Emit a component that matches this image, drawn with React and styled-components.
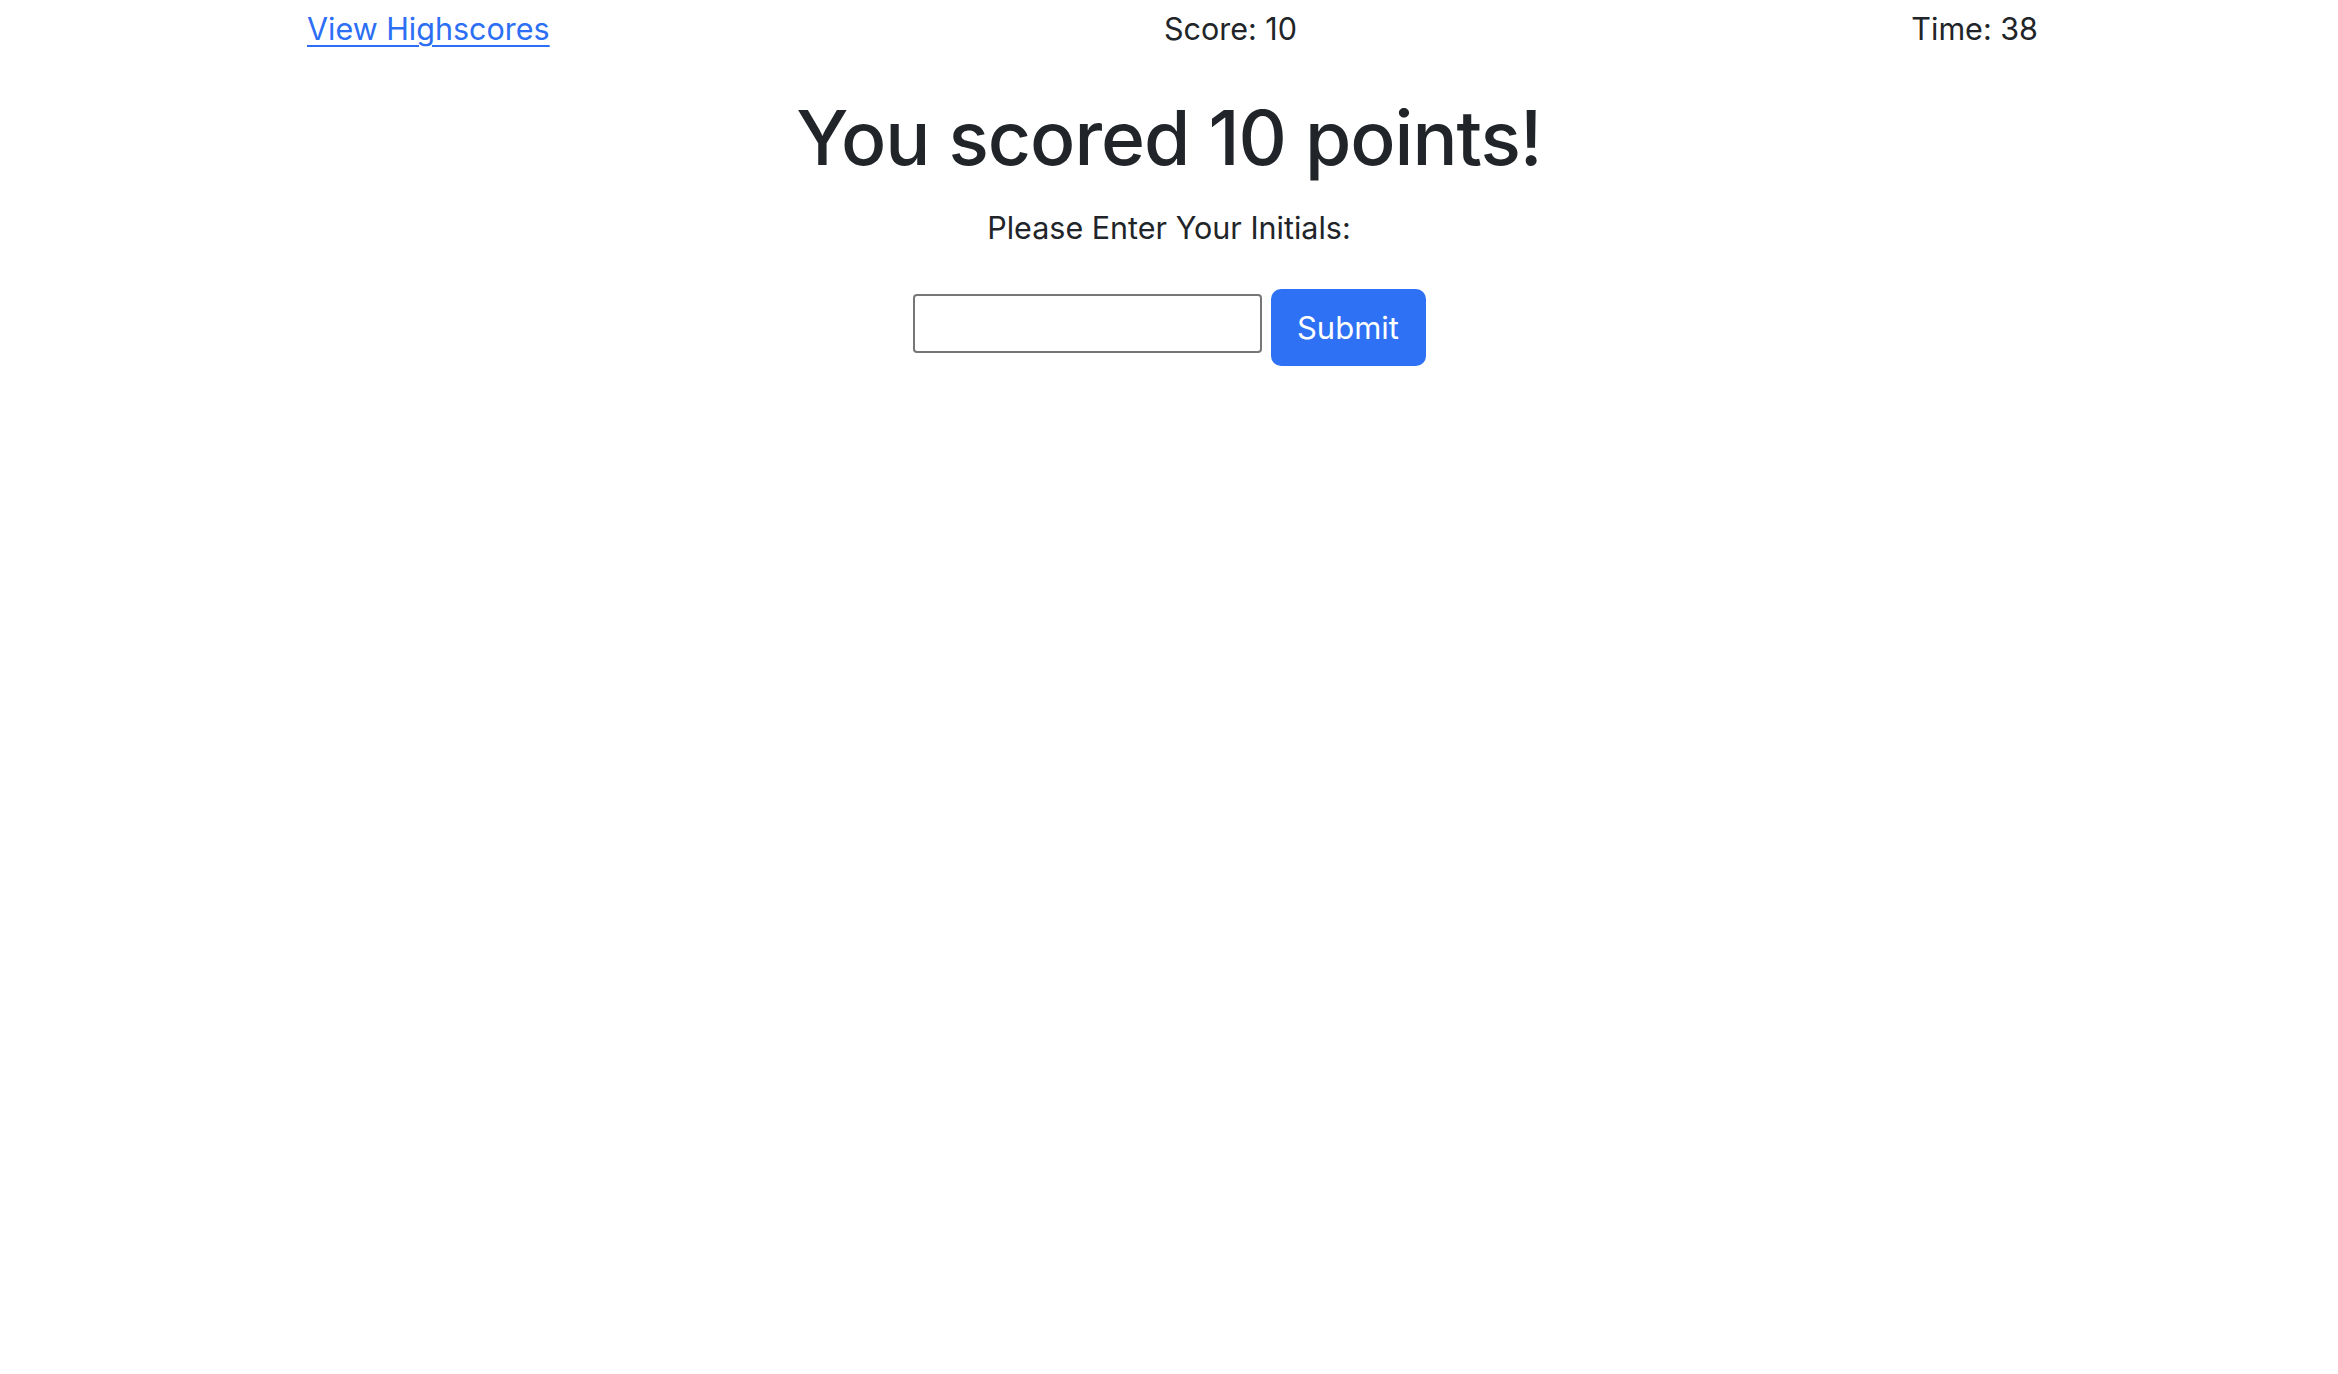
import React from "react";
import styled, { createGlobalStyle } from "styled-components";

const Global = createGlobalStyle`
  html, body { margin: 0; padding: 0; background: #ffffff; }
  body {
    font-family: Inter, "Noto Sans", "Liberation Sans", sans-serif;
    color: #212529;
    font-size: 30.5px;
    line-height: 48px;
  }
`;

const Page = styled.div`
  width: 2338px;
  min-height: 1374px;
  display: flex;
  flex-direction: column;
`;

const TopBar = styled.header`
  display: flex;
  justify-content: space-between;
  align-items: center;
  padding: 5px 300px 0 307px;
  height: 48px;
`;

const HighscoreLink = styled.a`
  color: #2d6ff4;
  text-decoration: underline;
  text-decoration-thickness: 2px;
  text-underline-offset: 5px;
  cursor: pointer;
`;

const Stat = styled.span`
  color: #212529;
`;

const Main = styled.main`
  display: flex;
  flex-direction: column;
  align-items: center;
  padding-top: 37px;
`;

const Heading = styled.h1`
  margin: 0 0 18px;
  font-size: 75px;
  font-weight: 500;
  line-height: 96px;
  letter-spacing: -1px;
`;

const Prompt = styled.p`
  margin: 0 0 37px;
  font-size: 30.5px;
`;

const Form = styled.form`
  display: flex;
  align-items: center;
  gap: 9px;
`;

const InitialsInput = styled.input`
  box-sizing: border-box;
  width: 349px;
  height: 59px;
  border: 2px solid #767676;
  border-radius: 4px;
  padding: 2px 4px;
  font-size: 26px;
  font-family: inherit;
  margin-top: -8px;
`;

const SubmitButton = styled.button`
  box-sizing: border-box;
  height: 77px;
  width: 155px;
  padding: 12px 0;
  border: 2px solid #2e71f5;
  border-radius: 10px;
  background: #2e71f5;
  color: #ffffff;
  font-family: inherit;
  font-size: 31px;
  line-height: 48px;
  cursor: pointer;
`;

export default function App() {
  return (
    <>
      <Global />
      <Page>
        <TopBar>
          <HighscoreLink>View Highscores</HighscoreLink>
          <Stat>Score: 10</Stat>
          <Stat>Time: 38</Stat>
        </TopBar>
        <Main>
          <Heading>You scored 10 points!</Heading>
          <Prompt>Please Enter Your Initials:</Prompt>
          <Form onSubmit={(e) => e.preventDefault()}>
            <InitialsInput type="text" />
            <SubmitButton type="submit">Submit</SubmitButton>
          </Form>
        </Main>
      </Page>
    </>
  );
}
